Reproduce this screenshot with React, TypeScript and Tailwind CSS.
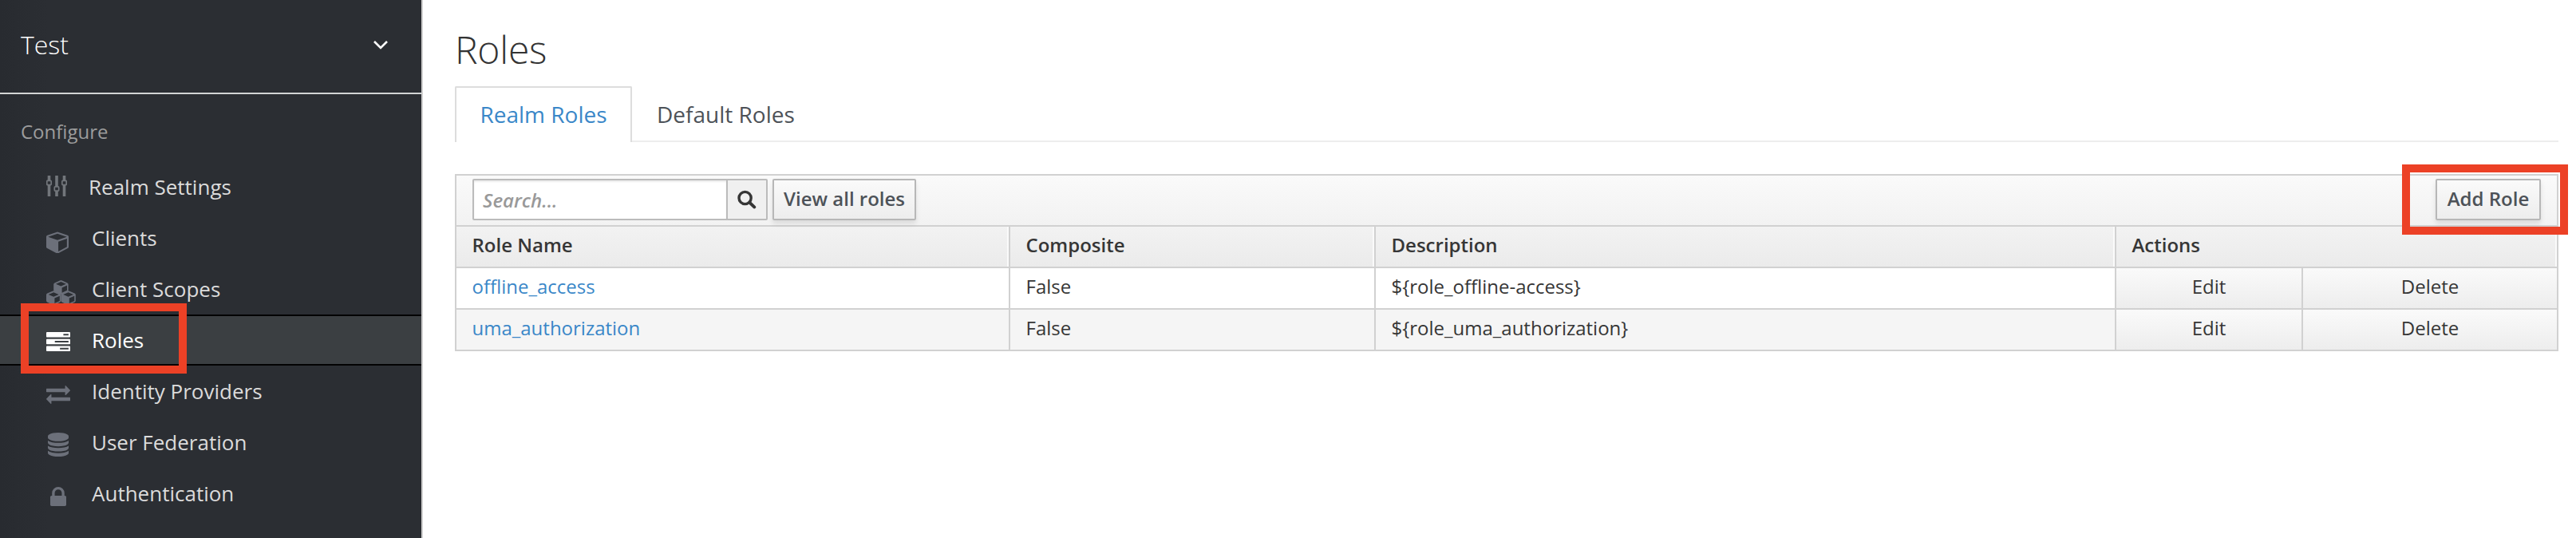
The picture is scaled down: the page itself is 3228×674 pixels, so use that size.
import type { ReactNode } from "react";

type IconProps = { className: string };

const Sliders = ({ className }: IconProps) => (
  <svg viewBox="0 0 26 26" className={className} fill="currentColor">
    {[
      [3.5, 6],
      [13, 13.5],
      [22.5, 6],
    ].map(([x, y]) => (
      <g key={x}>
        <rect x={x - 1.8} y="0" width="3.6" height={y} />
        <rect x={x - 1.8} y={y + 6} width="3.6" height={20 - y} />
        <rect x={x - 2.7} y={y + 0.4} width="5.4" height="5.2" rx="1" fill="none" stroke="currentColor" strokeWidth="1.7" />
      </g>
    ))}
  </svg>
);

const Cube = ({ className }: IconProps) => (
  <svg viewBox="0 0 1664 1728" preserveAspectRatio="none" className={className} fill="currentColor">
    <path d="M896 1597l640-349v-636l-640 233v752zm-64-865l698-254-698-254-698 254zm832-252v768q0 35-18 65t-49 47l-704 384q-28 16-61 16t-61-16l-704-384q-31-17-49-47t-18-65v-768q0-40 23-73t61-47l704-256q22-8 44-8t44 8l704 256q38 14 61 47t23 73z" />
  </svg>
);

const cubeOrigins = [
  [9.2, 0],
  [0, 13.2],
  [18.4, 13.2],
];

const Cubes = ({ className }: IconProps) => (
  <svg viewBox="0 0 37 31" className={className} fill="currentColor" fillRule="evenodd">
    {cubeOrigins.map(([x, y]) => (
      <path
        key={`${x}-${y}`}
        transform={`translate(${x} ${y})`}
        d="M8.3.3Q9.2 0 10.1.3L17.2 3.4Q18.4 4 18.4 5.2V12.4Q18.4 13.6 17.4 14.2L10.4 17.6Q9.2 18.1 8 17.6L1 14.2Q0 13.6 0 12.4V5.2Q0 4 1.2 3.4ZM9.2 2L2.8 4.8L9.2 7.5L15.6 4.8ZM10.4 9.4V15.8L16.8 12.7V6.6Z"
      />
    ))}
  </svg>
);

const Tasks = ({ className }: IconProps) => (
  <svg viewBox="0 256 1792 1408" preserveAspectRatio="none" className={className} fill="currentColor">
    <path d="M1024 1536h640v-128h-640v128zm-384-512h1024v-128h-1024v128zm640-512h384v-128h-384v128zm512 832v256q0 26-19 45t-45 19h-1664q-26 0-45-19t-19-45v-256q0-26 19-45t45-19h1664q26 0 45 19t19 45zm0-512v256q0 26-19 45t-45 19h-1664q-26 0-45-19t-19-45v-256q0-26 19-45t45-19h1664q26 0 45 19t19 45zm0-512v256q0 26-19 45t-45 19h-1664q-26 0-45-19t-19-45v-256q0-26 19-45t45-19h1664q26 0 45 19t19 45z" />
  </svg>
);

const Exchange = ({ className }: IconProps) => (
  <svg viewBox="0 288 1792 1344" preserveAspectRatio="none" className={className} fill="currentColor">
    <path d="M1792 1184v192q0 13-9.5 22.5t-22.5 9.5h-1376v192q0 13-9.5 22.5t-22.5 9.5q-12 0-24-10l-319-320q-9-9-9-22 0-14 9-23l320-320q9-9 23-9 13 0 22.5 9.5t9.5 22.5v192h1376q13 0 22.5 9.5t9.5 22.5zm0-544q0 14-9 23l-320 320q-9 9-23 9-13 0-22.5-9.5t-9.5-22.5v-192h-1376q-13 0-22.5-9.5t-9.5-22.5v-192q0-13 9.5-22.5t22.5-9.5h1376v-192q0-14 9-23t23-9q12 0 24 10l319 319q9 9 9 23z" />
  </svg>
);

const Database = ({ className }: IconProps) => (
  <svg viewBox="128 0 1536 1792" preserveAspectRatio="none" className={className} fill="currentColor">
    <path d="M896 768q237 0 443-43t325-127v170q0 69-103 128t-280 93.5-385 34.5-385-34.5-280-93.5-103-128v-170q119 84 325 127t443 43zm0 768q237 0 443-43t325-127v170q0 69-103 128t-280 93.5-385 34.5-385-34.5-280-93.5-103-128v-170q119 84 325 127t443 43zm0-384q237 0 443-43t325-127v170q0 69-103 128t-280 93.5-385 34.5-385-34.5-280-93.5-103-128v-170q119 84 325 127t443 43zm0-1152q208 0 385 34.5t280 93.5 103 128v128q0 69-103 128t-280 93.5-385 34.5-385-34.5-280-93.5-103-128v-128q0-69 103-128t280-93.5 385-34.5z" />
  </svg>
);

const Lock = ({ className }: IconProps) => (
  <svg viewBox="320 128 1152 1408" preserveAspectRatio="none" className={className} fill="currentColor">
    <path d="M640 768h512v-192q0-106-75-181t-181-75-181 75-75 181v192zm832 96v576q0 40-28 68t-68 28h-960q-40 0-68-28t-28-68v-576q0-40 28-68t68-28h32v-192q0-184 132-316t316-132 316 132 132 316v192h32q40 0 68 28t28 68z" />
  </svg>
);

const navItems: { label: string; icon: ReactNode; active?: boolean; narrow?: boolean }[] = [
  { label: "Realm Settings", icon: <Sliders className="mb-[2px] h-[26px] w-[26px] text-[#72767b]" />, narrow: true },
  { label: "Clients", icon: <Cube className="mt-[10px] h-[28px] w-[28px]" /> },
  { label: "Client Scopes", icon: <Cubes className="mt-[8px] h-[31px] w-[37px]" /> },
  { label: "Roles", icon: <Tasks className="mt-[4px] h-[24px] w-[30px] text-white" />, active: true },
  { label: "Identity Providers", icon: <Exchange className="mt-[8px] h-[23px] w-[30px]" /> },
  { label: "User Federation", icon: <Database className="ml-[2px] mt-[6px] h-[30px] w-[26px]" /> },
  { label: "Authentication", icon: <Lock className="ml-[5px] mt-[8px] h-[24px] w-[20px]" /> },
];

function Sidebar() {
  return (
    <aside className="relative h-full w-[530px] shrink-0 border-r-2 border-[#d1d1d1] bg-[linear-gradient(to_right,#282b30,#2b2e33_60px)]">
      <div className="flex h-[118px] items-center justify-between border-b-2 border-[#d3d5d5] pr-[42px] pl-[26px] pb-[4px] text-[32px] font-light text-white">
        <span>Test</span>
        <svg viewBox="0 0 18 11" className="h-[11px] w-[18px]" fill="none" stroke="currentColor" strokeWidth="2.6">
          <path d="M1 1L9 9L17 1" />
        </svg>
      </div>
      <div className="flex h-[84px] items-center pl-[26px] text-[24px] pt-[10px] text-[#9c9c9c]">Configure</div>
      <nav>
        {navItems.map(({ label, icon, active, narrow }) => (
          <div
            key={label}
            className={
              active
                ? "flex h-[64px] items-center border-y-2 border-[#030303] bg-[#3b3f42] pl-[58px] text-[26px] text-white"
                : "flex h-[64px] items-center pl-[58px] text-[26px] text-[#dbdbdb]"
            }
          >
            <span className={narrow ? "flex w-[53px] shrink-0 text-[#6c707a]" : "flex w-[57px] shrink-0 text-[#6c707a]"}>{icon}</span>
            <span>{label}</span>
          </div>
        ))}
      </nav>
      <div className="absolute top-[380px] left-[26px] h-[88px] w-[208px] border-10 border-[#ec4126]" />
    </aside>
  );
}

const buttonClass =
  "flex h-[52px] items-center justify-center rounded-[2px] border-2 border-[#b7b7b7] bg-linear-to-b from-[#fafafa] to-[#ededed] pb-[2px] text-[24px] font-semibold text-[#4d5258] shadow-[0_4px_6px_rgba(3,3,3,0.1)]";

const grid = "grid grid-cols-[694px_458px_928px_554px]";

const roles = [
  { name: "offline_access", description: "${role_offline-access}" },
  { name: "uma_authorization", description: "${role_uma_authorization}" },
];

const headerCell =
  "flex items-center border-r-2 border-[#d1d1d1] pl-[19.5px] pb-[4px] shadow-[inset_-2px_0_0_#fafafa]";
const bodyCell = "flex items-center border-r-2 border-[#d1d1d1] pl-[19.5px] pb-[4px]";
const actionCell =
  "flex items-center justify-center border-r-2 border-[#d1d1d1] bg-linear-to-b from-[#fafafa] to-[#ededed] pb-[4px]";

function RolesTable() {
  return (
    <section className="mt-[40px] h-[222px] w-[2636px] border-2 border-r-0 border-[#d1d1d1] text-[24px] text-[#363636]">
      <div className="flex h-[64px] items-start justify-between border-r-2 border-b-2 border-[#d1d1d1] bg-linear-to-b from-[#fafafa] to-[#f2f2f2] px-[20px] pt-[4px]">
        <div className="flex">
          <div className="flex h-[52px] w-[370px] rounded-[2px] border-2 border-[#bbb]">
            <div className="flex flex-1 items-center bg-white pt-[2px] pl-[11px] text-[#999] font-semibold italic shadow-[inset_0_2px_2px_rgba(3,3,3,0.075)]">
              Search...
            </div>
            <div className="flex w-[50px] items-center justify-center border-l-2 border-[#bbb] bg-[#f0f0f0] text-[#363636]">
              <svg viewBox="0 0 24 24" className="h-[24px] w-[24px]" fill="none" stroke="currentColor" strokeWidth="3.4">
                <circle cx="9.6" cy="10" r="7.6" />
                <path d="M15.2 15.6L21.2 21.4" strokeWidth="4" strokeLinecap="round" />
              </svg>
            </div>
          </div>
          <button className={`${buttonClass} ml-[6px] w-[180px]`}>View all roles</button>
        </div>
        <button className={`${buttonClass} w-[132px]`}>Add Role</button>
      </div>
      <div className={`${grid} h-[52px] border-b-2 border-[#d1d1d1] bg-linear-to-b from-[#f2f2f2] to-[#ebebeb] font-semibold`}>
        <div className={headerCell}>Role Name</div>
        <div className={headerCell}>Composite</div>
        <div className={headerCell}>Description</div>
        <div className={headerCell}>Actions</div>
      </div>
      {roles.map((role, i) => (
        <div
          key={role.name}
          className={
            i === 0
              ? `${grid} h-[52px] border-b-2 border-[#d1d1d1] bg-white`
              : `${grid} h-[50px] bg-[#f5f5f5]`
          }
        >
          <div className={`${bodyCell} text-[#3a87c8]`}>{role.name}</div>
          <div className={bodyCell}>False</div>
          <div className={bodyCell}>{role.description}</div>
          <div className="grid grid-cols-[234px_320px]">
            <div className={actionCell}>Edit</div>
            <div className={actionCell}>Delete</div>
          </div>
        </div>
      ))}
    </section>
  );
}

export default function App() {
  return (
    <div className="flex h-[674px] w-[3228px] overflow-hidden bg-white font-['Open_Sans','Noto_Sans',sans-serif]">
      <Sidebar />
      <main className="relative flex-1 pl-[40px]">
        <h1 className="flex h-[108px] items-end pb-[13px] text-[48px] leading-[66px] font-light tracking-[-0.2px] text-[#333]">
          Roles
        </h1>
        <div className="flex h-[70px] w-[2636px] text-[28px]">
          <div className="flex w-[222px] items-center justify-center rounded-t-[2px] border-2 border-b-0 border-[#ddd] pb-[3px] text-[#3a87c8]">
            Realm Roles
          </div>
          <div className="flex flex-1 items-center border-b-2 border-[#ededed] pt-[2px] pl-[31px] text-[#4d5258]">Default Roles</div>
        </div>
        <RolesTable />
        <div className="absolute top-[206px] left-[2480px] h-[88px] w-[208px] border-10 border-[#ec4126]" />
      </main>
    </div>
  );
}
